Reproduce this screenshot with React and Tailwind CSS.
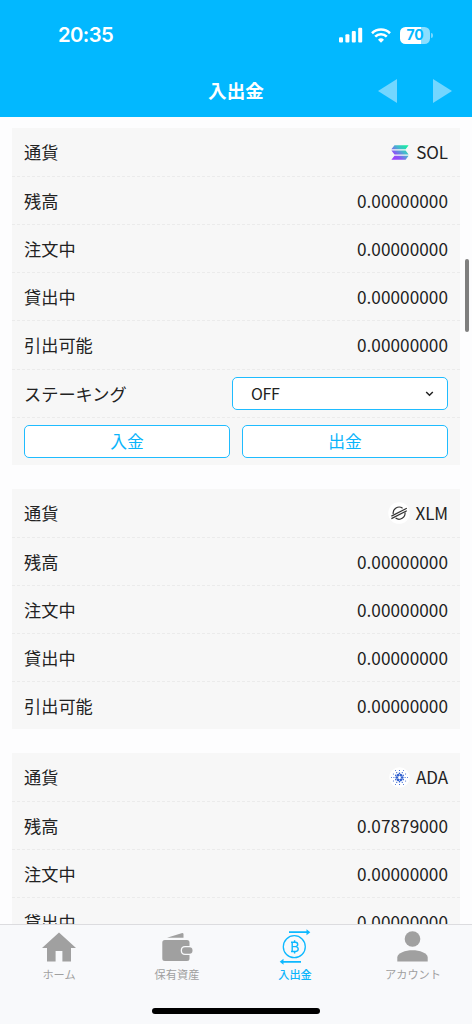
import React from "react";

const JP = "font-['Noto_Sans_CJK_JP',sans-serif]";

function SolLogo() {
  return (
    <svg width="18" height="15" viewBox="0 0 18 15" className="mr-[7px]">
      <defs>
        <linearGradient id="sol" x1="2" y1="15" x2="15" y2="0" gradientUnits="userSpaceOnUse">
          <stop offset="0" stopColor="#a03cff" />
          <stop offset="0.3" stopColor="#8b55f5" />
          <stop offset="0.65" stopColor="#45b9cd" />
          <stop offset="1" stopColor="#14f0a0" />
        </linearGradient>
      </defs>
      <path fill="url(#sol)" d="M3.5 0.2H17.6L14.6 4.3H0.4ZM0.4 5.5H14.6L17.6 9.4H3.5ZM3.5 10.7H17.6L14.6 14.8H0.4Z" />
    </svg>
  );
}

function XlmLogo() {
  return (
    <svg width="22" height="22" viewBox="0 0 22 22" className="mr-[6px]">
      <circle cx="11" cy="11" r="10.8" fill="#fff" />
      <g fill="none" stroke="#333" strokeWidth="1.2">
        <path d="M5.2 12A6 6 0 0 1 14.6 6.2" />
        <path d="M17 10.4A6 6 0 0 1 7.6 16.1" />
        <path d="M3.4 14.1L18.8 6.3M3.4 16.6L18.8 8.8" />
      </g>
    </svg>
  );
}

const RAYS = [0, 60, 120, 180, 240, 300];

function AdaLogo() {
  return (
    <svg width="21" height="21" viewBox="0 0 21 21" className="mr-[6px]">
      <circle cx="10.5" cy="10.5" r="10.3" fill="#fff" />
      <g fill="#2f5fd0">
        {RAYS.map((a) => (
          <g key={a} transform={`rotate(${a} 10.5 10.5)`}>
            <circle cx="13.2" cy="10.5" r="1.35" />
            <circle cx="14.2" cy="12.6" r="0.8" />
            <circle cx="16.1" cy="10.5" r="0.6" />
            <circle cx="16.6" cy="14" r="0.55" />
            <circle cx="18.5" cy="10.5" r="0.5" />
          </g>
        ))}
      </g>
    </svg>
  );
}

function Row({ label, children, tall, last }) {
  return (
    <div
      className={`flex shrink-0 items-center justify-between px-3 ${tall ? "h-[49px]" : last ? "h-[47px]" : "h-[48px]"} ${
        last ? "" : "border-b border-dashed border-[#ebebeb]"
      }`}
    >
      <span className="whitespace-nowrap text-[17.2px] leading-[26px]">{label}</span>
      {children}
    </div>
  );
}

function Amount({ children }) {
  return <span className="text-[17.2px] leading-[26px] tracking-[0.04px]">{children}</span>;
}

function Card({ logo, code, balance, children }) {
  return (
    <section className="flex shrink-0 flex-col bg-[#f7f7f7]">
      <Row label="通貨" tall>
        <span className="flex items-center text-[17px] leading-[26px] tracking-[-0.1px]">
          {logo}
          {code}
        </span>
      </Row>
      <Row label="残高"><Amount>{balance}</Amount></Row>
      <Row label="注文中"><Amount>0.00000000</Amount></Row>
      <Row label="貸出中"><Amount>0.00000000</Amount></Row>
      <Row label="引出可能" tall={Boolean(children)} last={!children}><Amount>0.00000000</Amount></Row>
      {children}
    </section>
  );
}

function ActionButton({ children }) {
  return (
    <button className="flex h-[33px] flex-1 items-center justify-center rounded-[5px] border border-[#1fbcff] bg-white pt-px text-[16.8px] text-[#0bb4fb]">
      {children}
    </button>
  );
}

function NavItem({ label, active, children }) {
  return (
    <div className={`flex w-[118px] flex-col items-center ${active ? "font-medium text-[#0cb5fc]" : "text-[#a0a0a0]"}`}>
      <div className="flex h-[40px] items-center justify-center">{children}</div>
      <span className="text-[11.2px] leading-[19px]">{label}</span>
    </div>
  );
}

export default function App() {
  return (
    <div className={`relative flex h-[1024px] w-[472px] flex-col overflow-hidden bg-[#fdfdfe] text-[#222] ${JP}`}>
      <header className="flex h-[117px] shrink-0 flex-col bg-[#02b8ff] text-white">
        <div className="flex h-[70px] items-center justify-between pl-[58px] pr-[39px]">
          <span className="pt-px font-['Inter',sans-serif] text-[20.3px] font-semibold tracking-[-0.6px]">20:35</span>
          <div className="flex items-center">
            <svg width="24" height="16" viewBox="0 0 24 16" fill="#fff">
              <rect x="0" y="10.2" width="4" height="5.3" rx="1.1" />
              <rect x="6.4" y="7.2" width="4" height="8.3" rx="1.1" />
              <rect x="12.8" y="4" width="4" height="11.5" rx="1.1" />
              <rect x="19.2" y="0.7" width="4" height="14.8" rx="1.1" />
            </svg>
            <svg width="20" height="15" viewBox="0 0 20 15" className="ml-[8px]" fill="none" stroke="#fff" strokeWidth="2.6">
              <path d="M1 5.2A12.9 12.9 0 0 1 19 5.2" />
              <path d="M4.2 8.7A8.2 8.2 0 0 1 15.8 8.7" />
              <path d="M7 11.7A4.3 4.3 0 0 1 13 11.7L10 14.8Z" fill="#fff" stroke="none" />
            </svg>
            <div className="ml-[9px] flex h-[17px] w-[30px] items-center justify-center rounded-[5.5px] bg-[linear-gradient(90deg,#fff_70%,#8adeff_70%)] font-['Inter',sans-serif] text-[14px] font-bold leading-none tracking-[-0.3px] text-[#02b8ff]">
              70
            </div>
            <div className="ml-[1px] h-[5px] w-[2px] rounded-r-full bg-[#77d7ff]" />
          </div>
        </div>
        <div className="grid h-[43px] grid-cols-[1fr_auto_1fr] items-center">
          <span />
          <h1 className="pb-[3px] text-[18.6px] font-bold leading-6">入出金</h1>
          <div className="flex justify-end gap-[36px] pb-[2px] pr-[20px]">
            <svg width="19" height="24" viewBox="0 0 19 24"><path d="M0 12L19 0V24Z" fill="#73d6ff" /></svg>
            <svg width="19" height="24" viewBox="0 0 19 24"><path d="M19 12L0 0V24Z" fill="#73d6ff" /></svg>
          </div>
        </div>
      </header>

      <main className="flex h-[807px] shrink-0 flex-col gap-[24px] overflow-hidden px-3 pt-[11px]">
        <Card logo={<SolLogo />} code="SOL" balance="0.00000000">
          <Row label="ステーキング">
            <div className="flex h-[33px] w-[216px] items-center justify-between rounded-[5px] border border-[#1fbcff] bg-white pl-[18px] pr-[13px]">
              <span className="pb-[2px] text-[16px] leading-6 tracking-[-0.3px]">OFF</span>
              <svg width="9" height="6" viewBox="0 0 9 6" className="mt-[1px]" fill="none" stroke="#222" strokeWidth="1.5">
                <path d="M1.2 1L4.5 4.2L7.8 1" />
              </svg>
            </div>
          </Row>
          <div className="flex h-[47px] items-center gap-3 px-3">
            <ActionButton>入金</ActionButton>
            <ActionButton>出金</ActionButton>
          </div>
        </Card>
        <Card logo={<XlmLogo />} code="XLM" balance="0.00000000" />
        <Card logo={<AdaLogo />} code="ADA" balance="0.07879000" />
      </main>

      <nav className="flex h-[100px] shrink-0 flex-col border-t border-[#dcdcdf] bg-[#f8f9fb]">
        <div className="flex">
          <NavItem label="ホーム">
            <svg width="34" height="30" viewBox="0 0 34 30" className="mt-[4px] mr-px" fill="#a0a0a0">
              <path d="M17 0.5L34 16H29V29.5H20.4V19H13.6V29.5H5V16H0Z" />
            </svg>
          </NavItem>
          <NavItem label="保有資産">
            <svg width="31" height="30" viewBox="0 0 31 30" className="mt-[4px]" fill="#a0a0a0">
              <path d="M5 5.8L19.5 1.2Q21.2 0.7 21.5 2V5.8Z" />
              <path d="M2.8 8H25Q27.5 8 27.5 10.5V14H23Q18.7 14.2 18.7 18.5Q18.7 22.8 23 23H27.5V26.5Q27.5 29 25 29H2.8Q0.3 29 0.3 26.5V10.5Q0.3 8 2.8 8Z" />
              <rect x="20" y="15.2" width="10.5" height="6.6" rx="3" />
            </svg>
          </NavItem>
          <NavItem label="入出金" active>
            <svg width="32" height="36" viewBox="0 0 32 36" className="mt-[4px]" fill="none" stroke="#0cb8ff" strokeWidth="1.5">
              <circle cx="15.3" cy="17.7" r="11" strokeWidth="1.3" />
              <path d="M10 3.2H28M4 32.8H22" strokeWidth="1.8" />
              <path d="M27.5 0.2L31.3 3.2L27.5 6.2ZM4.5 29.8L0.7 32.8L4.5 35.8Z" fill="#0cb8ff" stroke="none" />
              <path d="M12 13.2H16.5Q18.7 13.4 18.7 15.4T16.5 17.6H13.2H16.7Q19.2 17.8 19.2 20.1T16.7 22.5H12M13.2 13.2V22.5M15.6 11.3V13.2M15.6 22.5V24.4" strokeWidth="1.4" />
            </svg>
          </NavItem>
          <NavItem label="アカウント">
            <svg width="31" height="31" viewBox="0 0 31 31" className="mt-[3px] mr-px" fill="#a0a0a0">
              <circle cx="15.5" cy="8" r="7.8" />
              <path d="M0.3 30.5V26.5C0.3 22 8.5 19.3 15.5 19.3S30.7 22 30.7 26.5V30.5Z" />
            </svg>
          </NavItem>
        </div>
        <div className="mt-[24px] h-[6px] w-[168px] self-center rounded-full bg-black" />
      </nav>

      <div className="absolute left-[464.5px] top-[259px] h-[73px] w-[4px] rounded-full bg-[#808080]" />
    </div>
  );
}
